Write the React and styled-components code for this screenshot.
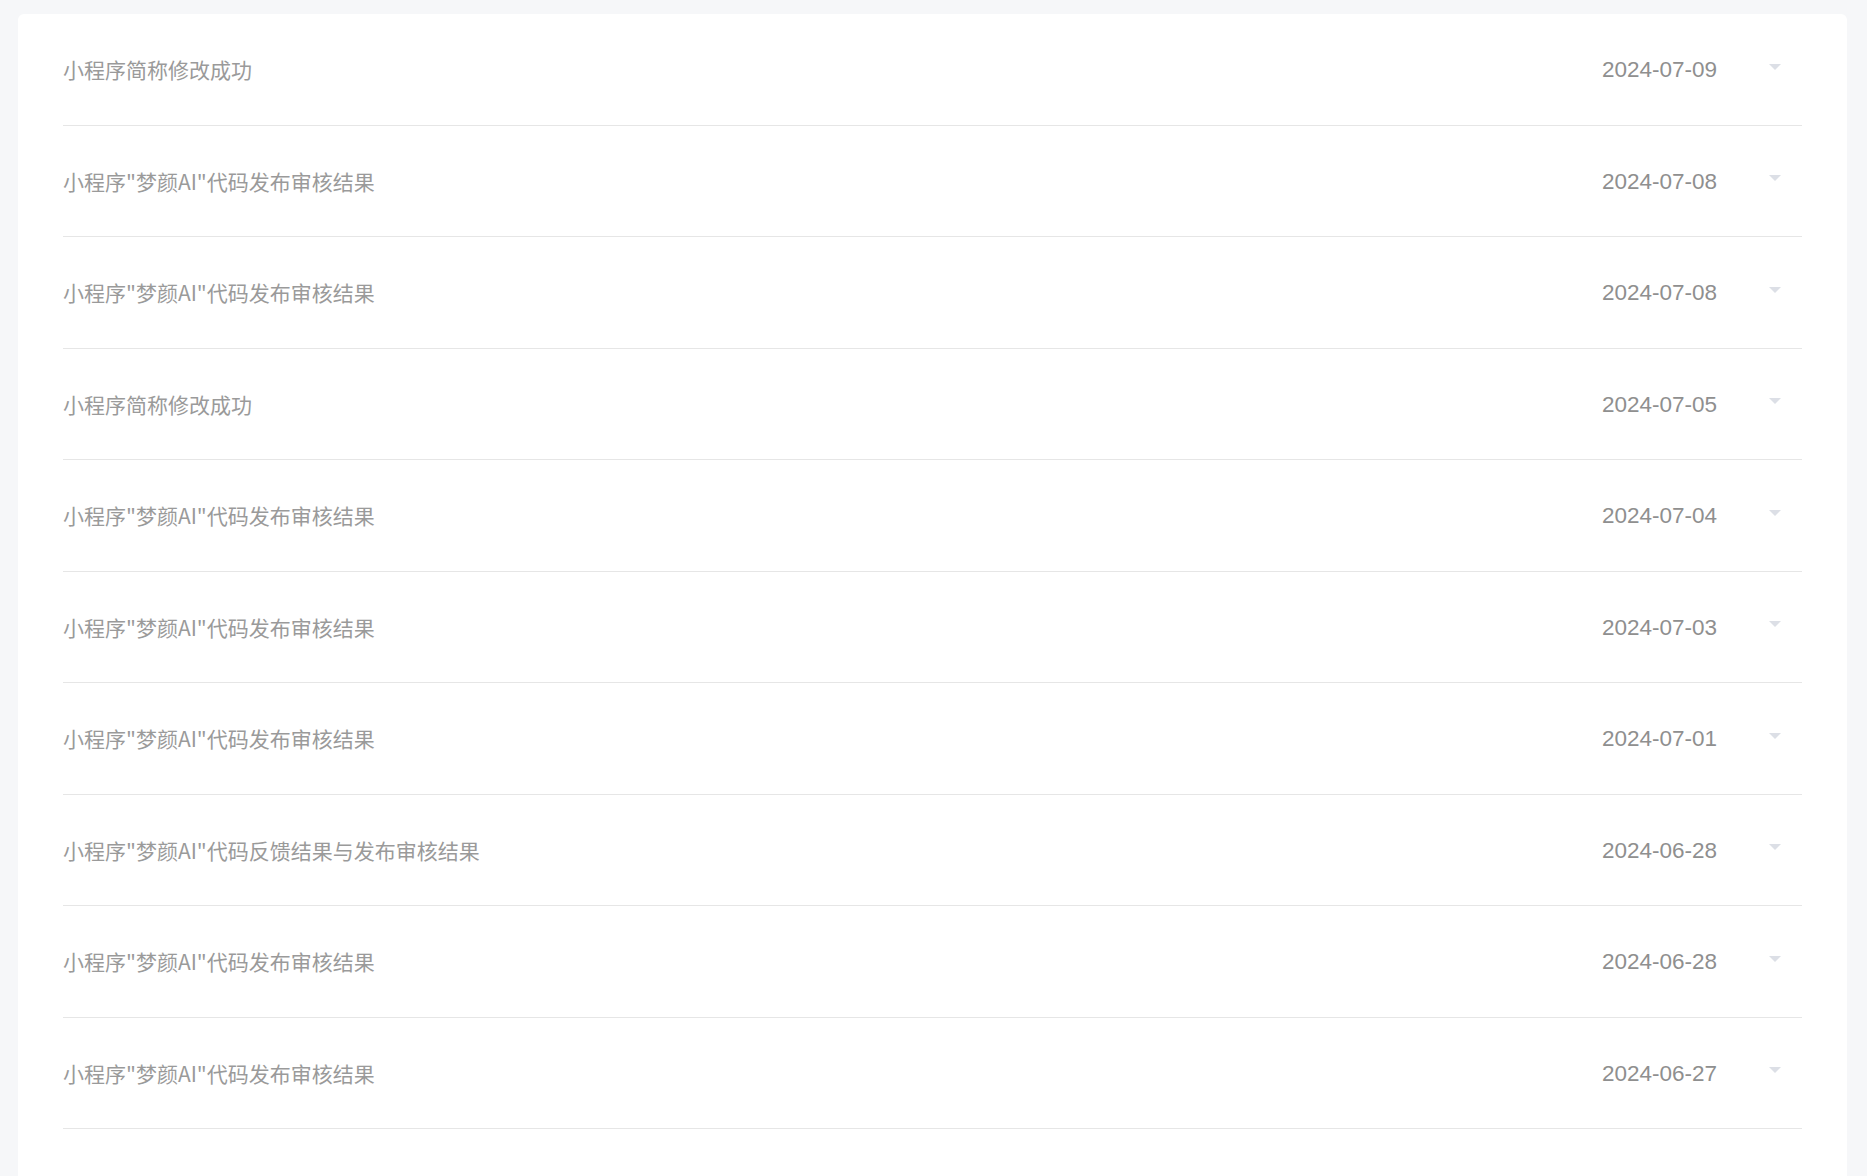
import styled, { createGlobalStyle } from "styled-components";

const GlobalStyle = createGlobalStyle`
  html, body {
    margin: 0;
    padding: 0;
    background: #f6f7f9;
    overflow: hidden;
  }
  body {
    font-family: "Noto Sans CJK SC", "Noto Sans", sans-serif;
  }
`;

const Page = styled.div`
  padding: 14px 20px 0 18px;
  height: 1176px;
  box-sizing: border-box;
`;

const Card = styled.section`
  background: #ffffff;
  border-radius: 6px;
  padding: 0 45px;
  min-height: 1200px;
`;

const Row = styled.div`
  display: flex;
  align-items: center;
  height: 111.5px;
  box-sizing: border-box;
  border-bottom: 1px solid #e6e6e6;
  padding-right: 21px;
`;

const Title = styled.div`
  flex: 1;
  font-family: "Noto Sans CJK SC", sans-serif;
  font-size: 21px;
  color: #9a9a9a;
  line-height: 1;
  padding-top: 1px;
`;

const Date = styled.div`
  font-family: "Liberation Sans", Arial, sans-serif;
  font-size: 22.5px;
  color: #8f8f8f;
  line-height: 1;
  padding-top: 2px;
  margin-right: 52px;
`;

const Caret = styled.span`
  width: 0;
  height: 0;
  border-left: 6px solid transparent;
  border-right: 6px solid transparent;
  border-top: 6px solid #dcdfe6;
  margin-bottom: 5px;
`;

const items = [
  ["小程序简称修改成功", "2024-07-09"],
  ['小程序"梦颜AI"代码发布审核结果', "2024-07-08"],
  ['小程序"梦颜AI"代码发布审核结果', "2024-07-08"],
  ["小程序简称修改成功", "2024-07-05"],
  ['小程序"梦颜AI"代码发布审核结果', "2024-07-04"],
  ['小程序"梦颜AI"代码发布审核结果', "2024-07-03"],
  ['小程序"梦颜AI"代码发布审核结果', "2024-07-01"],
  ['小程序"梦颜AI"代码反馈结果与发布审核结果', "2024-06-28"],
  ['小程序"梦颜AI"代码发布审核结果', "2024-06-28"],
  ['小程序"梦颜AI"代码发布审核结果', "2024-06-27"],
];

const App = () => {
  return (
    <>
      <GlobalStyle />
      <Page>
        <Card>
          {items.map(([title, date], i) => (
            <Row key={i}>
              <Title>{title}</Title>
              <Date>{date}</Date>
              <Caret />
            </Row>
          ))}
        </Card>
      </Page>
    </>
  );
};

export default App;
